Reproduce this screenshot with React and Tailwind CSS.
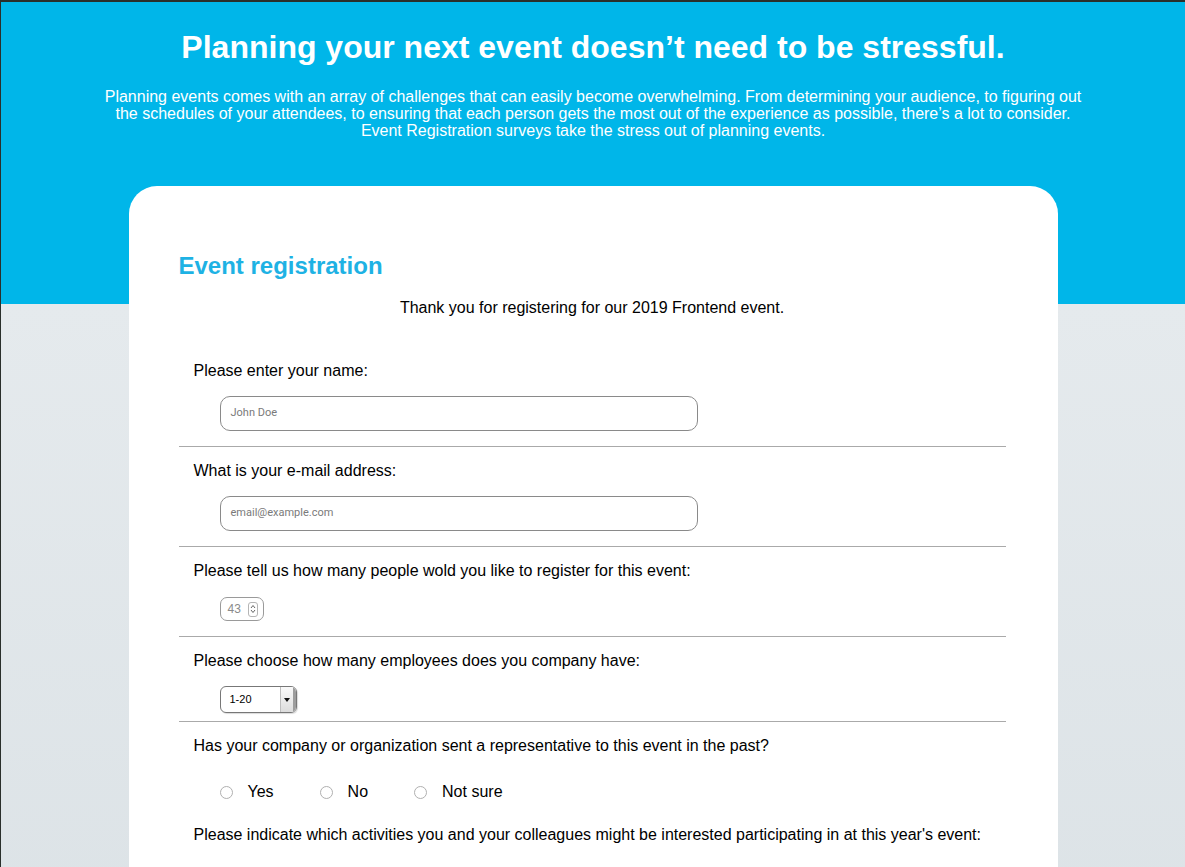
import React from "react";

const Divider = () => <div className="h-px bg-[#aaaaaa]" />;

const Label = ({ children }) => (
  <p className="pl-[15px] text-[16px] leading-[20px] text-black">{children}</p>
);

const TextField = ({ placeholder }) => (
  <div className="ml-[41px] mt-[15px] flex h-[35px] w-[478px] items-center rounded-[10px] border border-[#8a8a8a] px-[10px]">
    <span className="font-['Roboto',sans-serif] text-[11px] text-[#7a7a7a]">{placeholder}</span>
  </div>
);

const NumberField = ({ value }) => (
  <div className="ml-[41px] mt-[16px] flex h-[24px] w-[44px] items-center justify-between rounded-[7px] border border-[#9a9a9a] pl-[7px] pr-[5px]">
    <span className="text-[12px] text-[#8a8a8a]">{value}</span>
    <span className="flex h-[15px] w-[10px] items-center justify-center rounded-[3px] border border-[#b5b5b5]">
      <svg width="6" height="10" viewBox="0 0 6 10">
        <path d="M1 4 L3 1.5 L5 4" fill="none" stroke="#666" strokeWidth="1" />
        <path d="M1 6 L3 8.5 L5 6" fill="none" stroke="#666" strokeWidth="1" />
      </svg>
    </span>
  </div>
);

const SelectField = ({ value }) => (
  <div className="ml-[41px] mt-[15px] flex h-[27px] w-[77px] overflow-hidden rounded-[6px] border border-[#777777] shadow-[1px_1px_1px_rgba(0,0,0,0.15)]">
    <div className="flex flex-1 items-center pl-[9px] text-[11px] text-black">{value}</div>
    <div className="flex w-[16px] items-center justify-center border-l border-[#bdbdbd] bg-[linear-gradient(to_bottom,#fafafa,#dcdcdc)] shadow-[inset_-3px_0_0_#9d9d9d]">
      <svg width="6" height="4" viewBox="0 0 6 4" className="-ml-[2px]">
        <path d="M0 0 L6 0 L3 4 Z" fill="#111" />
      </svg>
    </div>
  </div>
);

const Radio = ({ label }) => (
  <label className="flex items-center gap-[15px]">
    <span className="h-[13px] w-[13px] rounded-full border border-[#b0b0b0] bg-white" />
    <span className="text-[16px] leading-[20px] text-black">{label}</span>
  </label>
);

export default function App() {
  return (
    <div className="min-h-screen overflow-hidden border-t-2 border-l border-[#2a2f2b] bg-[linear-gradient(to_bottom,#00b6e9_0,#00b6e9_302px,#e5eaed_302px,#dae1e5_100%)] font-['Liberation_Sans',Arial,sans-serif]">
      <header className="px-[60px] pt-[25px] text-center text-white">
        <h1 className="text-[32px] font-bold leading-[40px]">
          Planning your next event doesn’t need to be stressful.
        </h1>
        <p className="mt-[21px] text-[16px] leading-[17px]">
          Planning events comes with an array of challenges that can easily become overwhelming. From determining your audience, to figuring out
          <br />
          the schedules of your attendees, to ensuring that each person gets the most out of the experience as possible, there’s a lot to consider.
          <br />
          Event Registration surveys take the stress out of planning events.
        </p>
      </header>

      <main className="mx-auto mt-[47px] w-[929px] rounded-t-[28px] bg-white pl-[50px] pr-[52px] pt-[65px] pb-[40px]">
        <h2 className="text-[24px] font-bold leading-[30px] text-[#1eb2e4]">Event registration</h2>
        <p className="mt-[17px] text-center text-[16px] leading-[20px] text-black">
          Thank you for registering for our 2019 Frontend event.
        </p>

        <section className="mt-[43px] pb-[15px]">
          <Label>Please enter your name:</Label>
          <TextField placeholder="John Doe" />
        </section>
        <Divider />

        <section className="pt-[14px] pb-[15px]">
          <Label>What is your e-mail address:</Label>
          <TextField placeholder="email@example.com" />
        </section>
        <Divider />

        <section className="pt-[14px] pb-[15px]">
          <Label>Please tell us how many people wold you like to register for this event:</Label>
          <NumberField value="43" />
        </section>
        <Divider />

        <section className="pt-[14px] pb-[8px]">
          <Label>Please choose how many employees does you company have:</Label>
          <SelectField value="1-20" />
        </section>
        <Divider />

        <section className="pt-[14px]">
          <Label>Has your company or organization sent a representative to this event in the past?</Label>
          <div className="ml-[41px] mt-[26px] flex gap-[46px]">
            <Radio label="Yes" />
            <Radio label="No" />
            <Radio label="Not sure" />
          </div>
          <div className="mt-[23px]">
            <Label>
              Please indicate which activities you and your colleagues might be interested participating in at this year's event:
            </Label>
          </div>
        </section>
        <div className="h-[200px]" />
      </main>
    </div>
  );
}
